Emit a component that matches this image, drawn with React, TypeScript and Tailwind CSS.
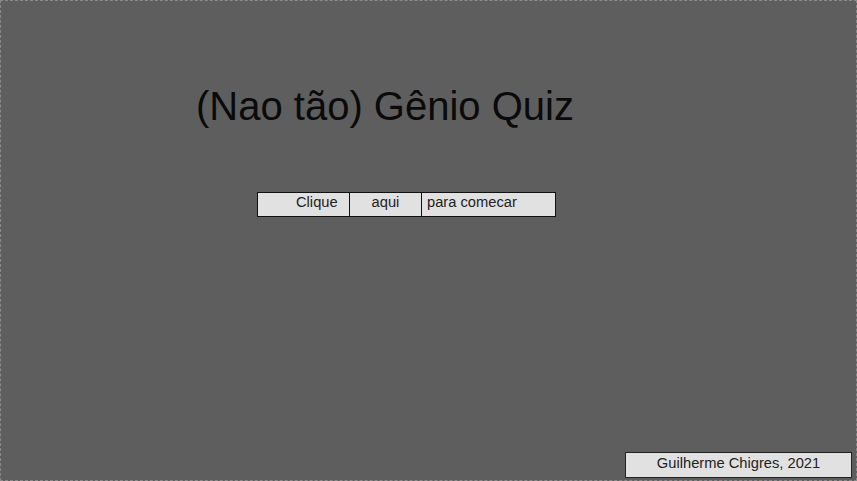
import React from "react";

export default function App() {
  return (
    <div
      className="w-[857px] h-[481px] bg-[#5e5e5e] border border-dashed border-[#8a8a8a] flex flex-col relative text-[#111]"
      style={{ fontFamily: '"Liberation Sans", Arial, sans-serif' }}
    >
      <h1 className="mt-[81px] ml-[195px] text-[40px] leading-[48px] text-[#0a0a0a] font-normal">
        (Nao tão) Gênio Quiz
      </h1>
      <div className="mt-[62px] ml-[256px] flex w-[299px] h-[25px] border border-[#111] bg-[#e1e1e1] text-[14.7px] leading-[16px] text-[#222]">
        <div className="w-[92px] border-r border-[#111] pl-[38px] pt-[1px]">Clique</div>
        <div className="w-[72px] border-r border-[#111] text-center pt-[1px]">aqui</div>
        <div className="flex-1 pl-[5px] pt-[1px]">para comecar</div>
      </div>
      <div className="mt-auto mb-[2px] ml-auto mr-[4px] w-[227px] h-[26px] border border-[#222] bg-[#e1e1e1] text-center text-[14.7px] leading-[20px] text-[#222]">
        Guilherme Chigres, 2021
      </div>
    </div>
  );
}
